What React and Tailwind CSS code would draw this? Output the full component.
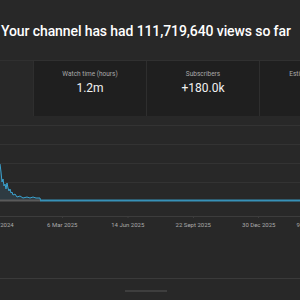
import React from "react";

const font = { fontFamily: "Roboto, 'Liberation Sans', sans-serif" };

function Card({ label, value }) {
  return (
    <div className="w-[113px] shrink-0 h-full bg-[#1f1f1f] border-l border-[#2e2e2e] flex flex-col items-center pt-[9px]">
      <div className="text-[6.5px] leading-[8px] text-[#aaaaaa] whitespace-nowrap">{label}</div>
      <div className="text-[12px] leading-[14px] text-[#f1f1f1] mt-[3px]">{value}</div>
    </div>
  );
}

export default function App() {
  const spiky =
    "M0,164 L1,172 L2,182 L3,179 L4,186 L5,184 L6,189 L7,183 L8,188 L9,191 L10,189 L11,193 L12,192 L13,195 L15,194 L17,197 L20,196 L23,198 L27,197 L30,198 L33,197 L36,198 L40,198 L40.5,200.5";
  return (
    <div className="w-[300px] h-[300px] overflow-hidden bg-[#282828]" style={font}>
      <div className="h-[61px] border-b border-[#303030] flex items-center">
        <div className="text-[14px] font-medium text-white whitespace-nowrap pl-[1px] mt-[2px] tracking-[-0.1px]">
          Your channel has had 111,719,640 views so far
        </div>
      </div>
      <div className="h-[55px] flex">
        <div className="w-[33px] shrink-0" />
        <Card label="Watch time (hours)" value="1.2m" />
        <Card label="Subscribers" value="+180.0k" />
        <Card label="Estimated revenue" value="" />
      </div>
      <svg width="300" height="102" viewBox="0 116 300 102" className="block">
        <line x1="0" x2="300" y1="125.5" y2="125.5" stroke="#333333" strokeWidth="1" />
        <line x1="0" x2="300" y1="144.5" y2="144.5" stroke="#333333" strokeWidth="1" />
        <line x1="0" x2="300" y1="163.5" y2="163.5" stroke="#333333" strokeWidth="1" />
        <line x1="0" x2="300" y1="182.5" y2="182.5" stroke="#333333" strokeWidth="1" />
        <path d={spiky + " L40.5,201 L0,201 Z"} fill="#2f4048" fillOpacity="0.8" />
        <rect x="0" y="199.5" width="40" height="2" fill="#5a5a5a" />
        <path d={spiky} fill="none" stroke="#3ba3d0" strokeWidth="1" />
        <line x1="40" x2="300" y1="200.5" y2="200.5" stroke="#3791b8" strokeWidth="2" />
        <line x1="0" x2="300" y1="216.5" y2="216.5" stroke="#3c3c3c" strokeWidth="1" />
        <line x1="62.5" x2="62.5" y1="216" y2="218" stroke="#3c3c3c" />
        <line x1="128" x2="128" y1="216" y2="218" stroke="#3c3c3c" />
        <line x1="193.5" x2="193.5" y1="216" y2="218" stroke="#3c3c3c" />
        <line x1="258.5" x2="258.5" y1="216" y2="218" stroke="#3c3c3c" />
      </svg>
      <div className="h-[58px] border-b border-[#3a3a3a] relative">
        <div className="flex ml-[-36px] mt-[3px] text-[6px] leading-[8px] text-[#aaaaaa] whitespace-nowrap">
          <div className="w-[65.5px] shrink-0 text-center">28 Nov 2024</div>
          <div className="w-[65.5px] shrink-0 text-center">6 Mar 2025</div>
          <div className="w-[65.5px] shrink-0 text-center">14 Jun 2025</div>
          <div className="w-[65.5px] shrink-0 text-center">22 Sept 2025</div>
          <div className="w-[65.5px] shrink-0 text-center">30 Dec 2025</div>
          <div className="pl-[5px]">9 Apr 2026</div>
        </div>
      </div>
      <div className="flex justify-center pt-[11px]">
        <div className="w-[42px] h-[2px] bg-[#3e3e3e] ml-[-8px]" />
      </div>
    </div>
  );
}
